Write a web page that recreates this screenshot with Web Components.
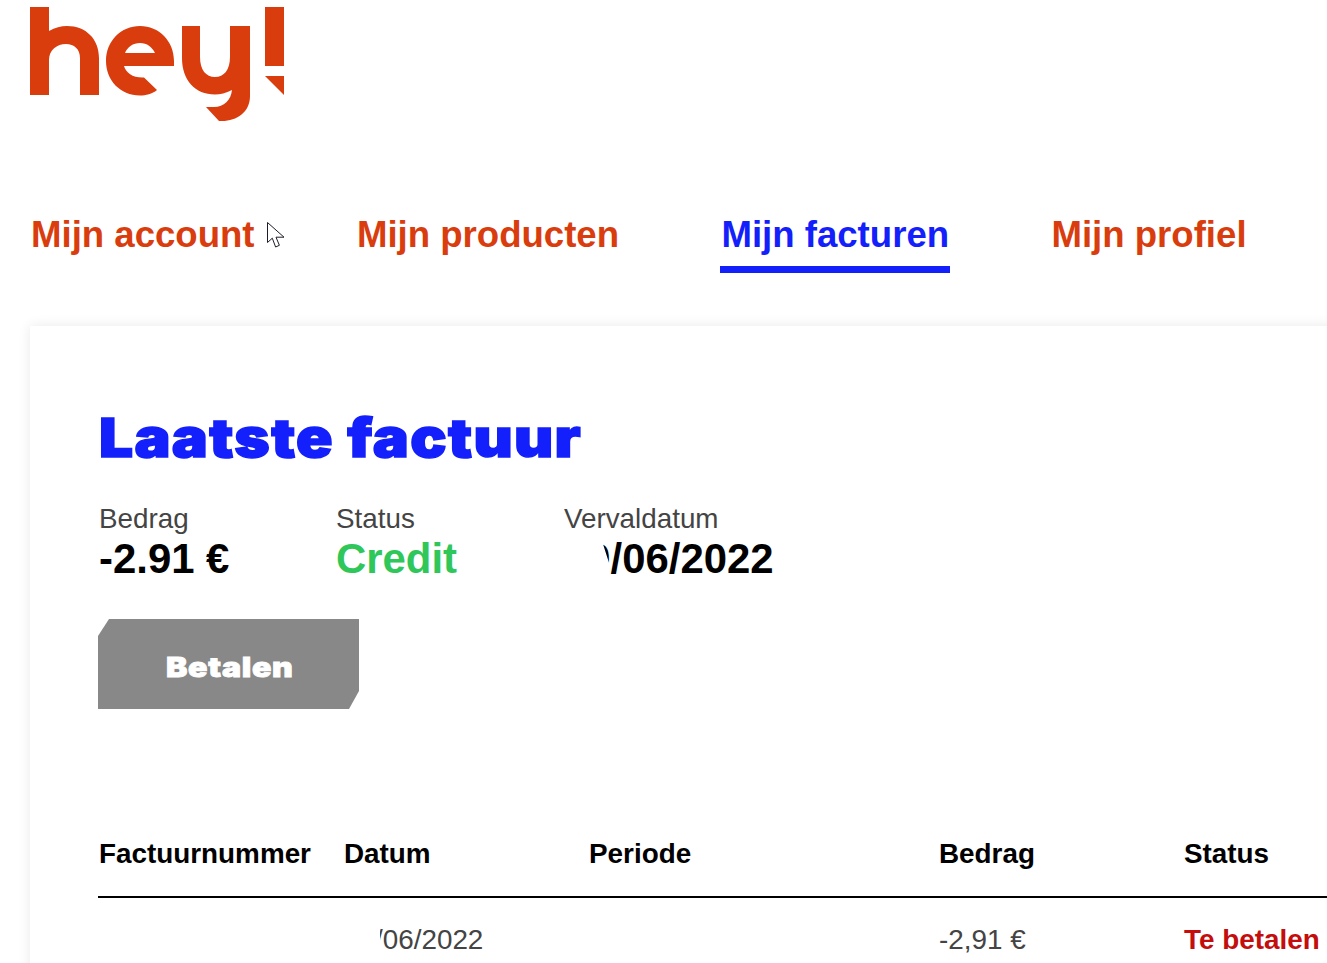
<!DOCTYPE html>
<html lang="nl"><head><meta charset="utf-8"><title>hey!</title>
<style>
html,body{margin:0;height:963px;overflow:hidden;background:#fff}
body{font-family:"Liberation Sans",Arial,sans-serif;color:#444}
</style></head><body>
<hey-page>
  <hey-logo slot="logo"></hey-logo>
  <hey-nav slot="nav">
    <hey-tab>Mijn account</hey-tab>
    <hey-tab>Mijn producten</hey-tab>
    <hey-tab active>Mijn facturen</hey-tab>
    <hey-tab>Mijn profiel</hey-tab>
  </hey-nav>
  <hey-card slot="card">
    <h-title>Laatste factuur</h-title>
    <hey-summary>
      <hey-stat label="Bedrag" style="width:236px">-2.91 €</hey-stat>
      <hey-stat label="Status" tone="green" style="width:227px">Credit</hey-stat>
      <hey-stat label="Vervaldatum" mask="46">30/06/2022</hey-stat>
    </hey-summary>
    <hey-button>Betalen</hey-button>
    <hey-table></hey-table>
  </hey-card>
</hey-page>
<script>
function def(name, css, html){
  customElements.define(name, class extends HTMLElement{
    constructor(){super();const r=this.attachShadow({mode:'open'});
      r.innerHTML='<style>'+css+'</style>'+(typeof html==='function'?html(this):html);}
  });
}
def('hey-page',`
  :host{display:flex;flex-direction:column;width:1327px;height:963px;overflow:hidden;position:relative}
  .logo{padding:7px 0 0 30px;height:119px}
  .nav{padding:91px 0 0 30px;}
  .card{padding:53px 0 0 30px}
  .cursor{position:absolute;left:266px;top:221px;width:20px;height:30px}
`,`<div class="logo"><slot name="logo"></slot></div>
<div class="nav"><slot name="nav"></slot></div>
<div class="card"><slot name="card"></slot></div>
<svg class="cursor" viewBox="0 0 20 30"><path d="M1.5 1.5V21.5L6.3 17.2L9.6 26L13.4 24.3L10 16.2H18Z" fill="#fff" stroke="#1c1c2a" stroke-width="1" stroke-linejoin="miter"/></svg>`);
def('hey-logo',`:host{display:block;width:260px;height:119px} svg{display:block}`,
`<svg width="260" height="119" viewBox="30 7 260 119" fill="#d93d0e">
<path d="M30 7H49V31C55 27.500 61 26 67 26C86 26 99 39 99 58V95H80V58C80 49 74 44 66 44C57 44 49 50 49 60V95H30Z"/>
<path fill-rule="evenodd" d="M174 66H124C126 73 133 78 144 77.500L157 90C152 94 146 95.500 140 95.500C120 95.500 106 80 106 61C106 41 121 26 140 26C159 26 174 41 174 61ZM155 53C152 47 147 43 140 43C133 43 127.500 47 125 53Z"/>
<path d="M182 26H200V57C200 70 206 77 215 77C224 77 230 70 230 57V26H250V96C250 112 237 121 222 121H219L206 107H214C224 107 231 100 232 90C226 93 220 94.500 215 94.500C195 94.500 182 80 182 58Z"/>
<path d="M265 7H284V66H265ZM265 76H284V95Z"/>
</svg>`);
def('hey-nav',`:host{display:flex;gap:100.4px;font:bold 36.6px/1 "Liberation Sans",Arial,sans-serif}`,`<slot></slot>`);
def('hey-tab',`
  :host{display:block;color:#d93d0e;padding:0 1px;height:56px;line-height:36px;box-sizing:content-box;border-bottom:0 solid #1420fb;white-space:nowrap}
  :host([active]){color:#1420fb;height:49px;border-bottom-width:7px}
`,`<slot></slot>`);
def('hey-card',`
  :host{display:block;background:#fff;box-shadow:0 0 12px rgba(0,0,0,.09);padding:84px 0 0 68px;height:700px;box-sizing:border-box;width:1400px}
`,`<slot></slot>`);
def('h-title',`
  :host{display:block;margin-left:1px;color:#1420fb;font:900 54px/56px Inter,"Liberation Sans",sans-serif;-webkit-text-stroke:1.500px #1420fb;letter-spacing:1.200px;white-space:nowrap;transform-origin:0 0;transform:scaleX(1.118)}
`,`<slot></slot>`);
def('hey-summary',`:host{display:flex;margin-top:37px}`,`<slot></slot>`);
def('hey-stat',`
  :host{display:block;flex:none;padding-left:1px}
  .l{font-size:27.8px;line-height:32px;color:#444}
  .v{position:relative;margin-top:1px;font:bold 41.9px/46px "Liberation Sans",Arial,sans-serif;color:#000;white-space:nowrap}
  :host([tone=green]) .v{color:#2fc75a}
  .m{position:absolute;left:0;top:0;height:46px;background:#fff;clip-path:polygon(0 0,38px 0,39px 8px,46px 30px,46px 46px,0 46px)}
`,h=>`<div class="l">${h.getAttribute('label')}</div><div class="v"><slot></slot>${h.hasAttribute('mask')?`<span class="m" style="width:${h.getAttribute('mask')}px"></span>`:''}</div>`);
def('hey-button',`
  :host{display:flex;align-items:center;justify-content:center;box-sizing:border-box;padding:7px 0 0 2px;width:261px;height:90px;margin-top:37px;background:#888;color:#fff;
  clip-path:polygon(11px 0,100% 0,100% 72px,251px 100%,0 100%,0 17px);
  font:900 27px/1 Inter,"Liberation Sans",sans-serif;-webkit-text-stroke:.8px #fff;letter-spacing:.6px}
  span{display:inline-block;transform:scaleX(1.187)}
`,`<span><slot></slot></span>`);
def('hey-table',`
  :host{display:block;margin-top:113px;width:1300px;font-size:27.85px}
  .r{display:grid;grid-template-columns:245px 245px 350px 245px 1fr;padding-left:1px}
  .h{font-weight:bold;color:#000;height:74px;line-height:64px;border-bottom:2px solid #000;white-space:nowrap}
  .b{height:84px;line-height:84px;color:#444;white-space:nowrap}
  .d{position:relative}
  .d i{position:absolute;left:0;top:0;width:36px;height:70px;background:#fff}
  .s{color:#c40d0d;font-weight:bold}
`,`<div class="r h"><span>Factuurnummer</span><span>Datum</span><span>Periode</span><span>Bedrag</span><span>Status</span></div>
<div class="r b"><span></span><span class="d">30/06/2022<i></i></span><span></span><span>-2,91 €</span><span class="s">Te betalen</span></div>`);
</script>
</body></html>
